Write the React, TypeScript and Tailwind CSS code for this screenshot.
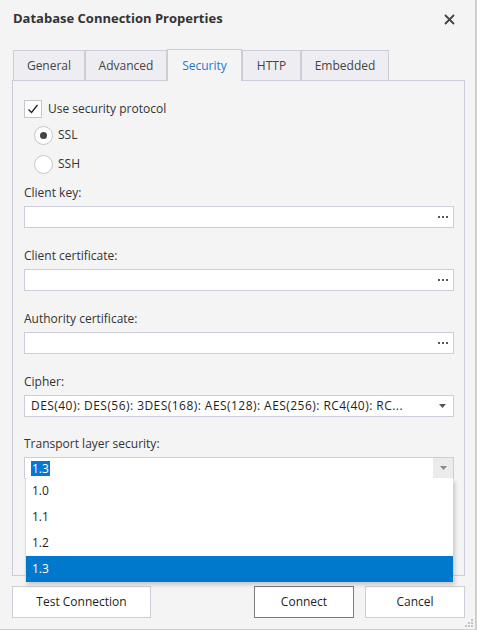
import React from "react";

const FONT = "font-['Open_Sans','Noto_Sans',sans-serif]";

const tabs = [
  { label: "General", w: "w-[72px]" },
  { label: "Advanced", w: "w-[82px]" },
  { label: "Security", w: "w-[75px]", active: true },
  { label: "HTTP", w: "w-[59px]" },
  { label: "Embedded", w: "w-[88px]" },
];

function Dots() {
  return (
    <div className="flex gap-[2px] mr-[5px]">
      <span className="block w-[2px] h-[2px] bg-[#555]" />
      <span className="block w-[2px] h-[2px] bg-[#555]" />
      <span className="block w-[2px] h-[2px] bg-[#555]" />
    </div>
  );
}

function Arrow({ color }: { color: string }) {
  return (
    <svg width="7" height="4" viewBox="0 0 7 4">
      <path d="M0 0 H7 L3.5 4 Z" fill={color} />
    </svg>
  );
}

function FileField({ label }: { label: string }) {
  return (
    <div className="flex flex-col">
      <div className="h-[16px] leading-[16px] text-[#333]">{label}</div>
      <div className="mt-[5px] mb-[20px] h-[22px] w-[430px] bg-white border border-[#cdcdd9] flex items-center justify-end">
        <Dots />
      </div>
    </div>
  );
}

export default function App() {
  const versions = ["1.0", "1.1", "1.2", "1.3"];

  return (
    <div
      className={`${FONT} relative w-[477px] h-[630px] bg-[#f4f4f4] border-r-2 border-b border-[#cfcfcf] text-[12px] text-[#1e1e1e] overflow-hidden`}
    >
      {/* title */}
      <div className="h-[38px] flex items-center justify-between pl-[13px] pr-[20px]">
        <span className="text-[13px] font-bold text-[#333]">
          Database Connection Properties
        </span>
        <svg width="11" height="11" viewBox="0 0 11 11">
          <path d="M1 1 L10 10 M10 1 L1 10" stroke="#444" strokeWidth="1.8" />
        </svg>
      </div>

      {/* tabs */}
      <div className="mt-[11px] ml-[13px] flex items-end h-[31px]">
        {tabs.map((t) =>
          t.active ? (
            <div
              key={t.label}
              className={`${t.w} h-[32px] -mb-px relative z-10 bg-[#f4f4f4] border-l border-t border-r border-[#cdcdd9] flex items-center justify-center text-[#1a7ad4]`}
            >
              {t.label}
            </div>
          ) : (
            <div
              key={t.label}
              className={`${t.w} h-[30px] bg-[#eeeef2] border-l border-t border-r border-[#cdcdd9] flex items-center justify-center text-[#444]`}
            >
              {t.label}
            </div>
          )
        )}
      </div>

      {/* panel */}
      <div className="ml-[12px] w-[453px] h-[496px] border border-[#cdcdd9] pt-[19px] pl-[11px] flex flex-col">
        <div className="flex items-center h-[18px]">
          <div className="w-[18px] h-[18px] bg-white border border-[#c5c5d0] flex items-center justify-center">
            <svg width="12" height="12" viewBox="0 0 12 12">
              <path d="M1.5 6.5 L4.5 9.5 L10.5 2" fill="none" stroke="#222" strokeWidth="1.3" />
            </svg>
          </div>
          <span className="ml-[6px] text-[#333]">Use security protocol</span>
        </div>

        <div className="flex items-center h-[18px] mt-[8px] ml-[10px]">
          <div className="w-[19px] h-[19px] rounded-full bg-white border border-[#c5c5d0] flex items-center justify-center">
            <span className="block w-[7px] h-[7px] rounded-full bg-[#444]" />
          </div>
          <span className="ml-[5px] text-[#333]">SSL</span>
        </div>

        <div className="flex items-center h-[18px] mt-[11px] ml-[10px]">
          <div className="w-[19px] h-[19px] rounded-full bg-white border border-[#c5c5d0]" />
          <span className="ml-[5px] text-[#333]">SSH</span>
        </div>

        <div className="mt-[12px]">
          <FileField label="Client key:" />
          <FileField label="Client certificate:" />
          <FileField label="Authority certificate:" />

          <div className="h-[16px] leading-[16px] text-[#333]">Cipher:</div>
          <div className="mt-[5px] mb-[19px] h-[22px] w-[430px] bg-white border border-[#cdcdd9] flex items-center justify-between pl-[6px] pr-[7px]">
            <span className="whitespace-nowrap tracking-[0.45px]">
              DES(40): DES(56): 3DES(168): AES(128): AES(256): RC4(40): RC...
            </span>
            <Arrow color="#555" />
          </div>

          <div className="h-[16px] leading-[16px] text-[#333]">Transport layer security:</div>
          <div className="relative mt-[5px] w-[430px]">
            <div className="h-[22px] bg-white border border-[#cdcdd9] flex items-center justify-between pl-[6px]">
              <span className="bg-[#0078d7] text-white px-[1px] leading-[15px]">1.3</span>
              <div className="w-[20px] h-full bg-[#ebebeb] flex items-center justify-center">
                <Arrow color="#8a8a8a" />
              </div>
            </div>

            <div className="absolute left-[1px] top-[21px] z-20 w-[428px] bg-white border-l border-[#dcdce4] shadow-[2px_3px_4px_rgba(0,0,0,0.18)]">
              {versions.map((v) => (
                <div
                  key={v}
                  className={`h-[26px] flex items-center pl-[6px] ${
                    v === "1.3" ? "bg-[#0078cc] text-white" : "text-[#1e1e1e]"
                  }`}
                >
                  {v}
                </div>
              ))}
            </div>
          </div>
        </div>
      </div>

      {/* buttons */}
      <div className="mt-[10px] ml-[12px] w-[453px] flex items-center">
        <button className="w-[139px] h-[32px] bg-white border border-[#cdcdd9] text-[#1e1e1e]">
          Test Connection
        </button>
        <div className="flex-1" />
        <button className="w-[100px] h-[32px] bg-white border border-[#7a7a7a] text-[#1e1e1e]">
          Connect
        </button>
        <button className="ml-[11px] w-[100px] h-[32px] bg-white border border-[#cdcdd9] text-[#1e1e1e]">
          Cancel
        </button>
      </div>

      {/* resize grip */}
      <svg className="absolute right-[1px] bottom-[1px]" width="10" height="10" viewBox="0 0 10 10">
        <rect x="7" y="1" width="2" height="2" fill="#c4c4c4" />
        <rect x="4" y="4" width="2" height="2" fill="#c4c4c4" />
        <rect x="7" y="4" width="2" height="2" fill="#c4c4c4" />
        <rect x="1" y="7" width="2" height="2" fill="#c4c4c4" />
        <rect x="4" y="7" width="2" height="2" fill="#c4c4c4" />
        <rect x="7" y="7" width="2" height="2" fill="#c4c4c4" />
      </svg>
    </div>
  );
}
